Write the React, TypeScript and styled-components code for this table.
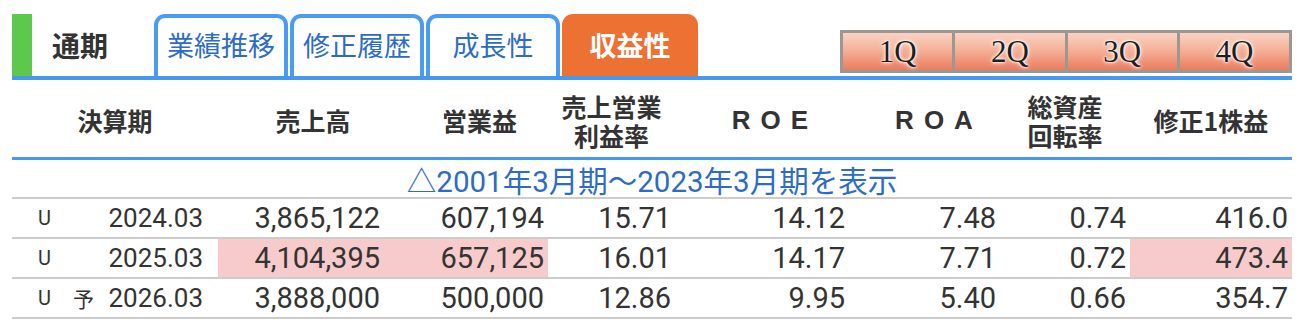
import React from "react";
import styled, { createGlobalStyle } from "styled-components";

const Global = createGlobalStyle`
  html, body { margin: 0; padding: 0; background: #fff; }
  body { font-family: Roboto, "Noto Sans CJK JP", sans-serif; }
`;

const Page = styled.div`
  padding: 14px 12px 0 12px;
  width: 1280px;
`;

const TabBar = styled.div`
  display: flex;
  align-items: flex-end;
  height: 62px;
  border-bottom: 4px solid #4599f0;
`;

const PeriodLabel = styled.div`
  box-sizing: border-box;
  width: 142px;
  height: 62px;
  border-left: 20px solid #5cc84c;
  padding-left: 20px;
  display: flex;
  align-items: center;
  font-family: "Noto Sans CJK JP", sans-serif;
  font-weight: 700;
  font-size: 28px;
  color: #333;
`;

const Tab = styled.div<{ $active?: boolean }>`
  box-sizing: border-box;
  width: ${(p) => (p.$active ? 136 : 134)}px;
  height: 62px;
  margin-right: 2px;
  border: 4px solid ${(p) => (p.$active ? "#ec7132" : "#4a9bf2")};
  border-bottom: none;
  border-radius: 11px 11px 0 0;
  background: ${(p) => (p.$active ? "#ec7132" : "#fff")};
  color: ${(p) => (p.$active ? "#fff" : "#2d6cc6")};
  font-family: "Noto Sans CJK JP", sans-serif;
  font-weight: ${(p) => (p.$active ? 700 : 400)};
  font-size: 27px;
  display: flex;
  align-items: center;
  justify-content: center;
  padding-bottom: 6px;
`;

const Spacer = styled.div`
  flex: 1;
`;

const QuarterGroup = styled.div`
  display: flex;
  gap: 3px;
  padding: 3px;
  width: 452px;
  height: 43px;
  box-sizing: border-box;
  margin-bottom: 3px;
  background: #9c9793;
`;

const QuarterButton = styled.div`
  flex: 1;
  display: flex;
  align-items: center;
  justify-content: center;
  background: linear-gradient(#fad3c4 0%, #f4ad95 50%, #ea7c5e 100%);
  font-family: "Liberation Serif", serif;
  font-size: 31px;
  line-height: 1;
  color: #1e1e1e;
  text-shadow: 0 0 2px #fff, 0 0 3px #fff, 0 0 5px #fff;
`;

const COLS = "206px 166px 164px 127px 174px 151px 130px 162px";

const HeaderRow = styled.div`
  display: grid;
  grid-template-columns: ${COLS};
  height: 77px;
  border-bottom: 3px solid #4599f0;
`;

const HeaderCell = styled.div<{ $shift?: number; $latin?: boolean }>`
  display: flex;
  align-items: center;
  justify-content: center;
  text-align: center;
  padding-left: ${(p) => p.$shift ?? 0}px;
  padding-top: 4px;
  font-family: ${(p) =>
    p.$latin ? `"Liberation Sans", sans-serif` : `"Noto Sans CJK JP", sans-serif`};
  font-weight: 700;
  font-size: ${(p) => (p.$latin ? 26 : 25)}px;
  line-height: 29px;
  letter-spacing: ${(p) => (p.$latin ? "10px" : "0")};
  color: #333;
`;

const LinkRow = styled.div`
  height: 37px;
  border-bottom: 2px solid #cccccc;
  display: flex;
  align-items: center;
  justify-content: center;
  font-family: Roboto, "Noto Sans CJK JP", sans-serif;
  font-size: 29.5px;
  color: #2d6cc6;
`;

const DataRow = styled.div`
  display: grid;
  grid-template-columns: ${COLS};
  height: 38px;
  border-bottom: 2px solid #cccccc;
`;

const Cell = styled.div<{ $hl?: boolean }>`
  display: flex;
  align-items: center;
  justify-content: flex-end;
  padding-right: 4px;
  background: ${(p) => (p.$hl ? "#f7cbcb" : "transparent")};
  font-family: Roboto, sans-serif;
  font-size: 29px;
  color: #333;
`;

const PeriodCell = styled.div`
  display: flex;
  align-items: center;
  padding: 0 15px 0 26px;
  color: #333;
`;

const Mark = styled.span`
  font-family: Roboto, sans-serif;
  font-size: 20px;
  width: 35px;
`;

const Forecast = styled.span`
  font-family: "Noto Sans CJK JP", sans-serif;
  font-size: 21px;
`;

const DateText = styled.span`
  margin-left: auto;
  font-family: Roboto, sans-serif;
  font-size: 26px;
`;

type Row = {
  forecast?: boolean;
  date: string;
  values: string[];
  hl: number[];
};

const rows: Row[] = [
  {
    date: "2024.03",
    values: ["3,865,122", "607,194", "15.71", "14.12", "7.48", "0.74", "416.0"],
    hl: [],
  },
  {
    date: "2025.03",
    values: ["4,104,395", "657,125", "16.01", "14.17", "7.71", "0.72", "473.4"],
    hl: [0, 1, 6],
  },
  {
    forecast: true,
    date: "2026.03",
    values: ["3,888,000", "500,000", "12.86", "9.95", "5.40", "0.66", "354.7"],
    hl: [],
  },
];

export default function App() {
  return (
    <>
      <Global />
      <Page>
        <TabBar>
          <PeriodLabel>通期</PeriodLabel>
          <Tab>業績推移</Tab>
          <Tab>修正履歴</Tab>
          <Tab>成長性</Tab>
          <Tab $active>収益性</Tab>
          <Spacer />
          <QuarterGroup>
            <QuarterButton>1Q</QuarterButton>
            <QuarterButton>2Q</QuarterButton>
            <QuarterButton>3Q</QuarterButton>
            <QuarterButton>4Q</QuarterButton>
          </QuarterGroup>
        </TabBar>
        <HeaderRow>
          <HeaderCell>決算期</HeaderCell>
          <HeaderCell $shift={24}>売上高</HeaderCell>
          <HeaderCell $shift={27}>営業益</HeaderCell>
          <HeaderCell>
            売上営業
            <br />
            利益率
          </HeaderCell>
          <HeaderCell $latin $shift={26}>ROE</HeaderCell>
          <HeaderCell $latin $shift={29}>ROA</HeaderCell>
          <HeaderCell>
            総資産
            <br />
            回転率
          </HeaderCell>
          <HeaderCell>修正1株益</HeaderCell>
        </HeaderRow>
        <LinkRow>△2001年3月期～2023年3月期を表示</LinkRow>
        {rows.map((r) => (
          <DataRow key={r.date}>
            <PeriodCell>
              <Mark>U</Mark>
              {r.forecast && <Forecast>予</Forecast>}
              <DateText>{r.date}</DateText>
            </PeriodCell>
            {r.values.map((v, i) => (
              <Cell key={i} $hl={r.hl.includes(i)}>
                {v}
              </Cell>
            ))}
          </DataRow>
        ))}
      </Page>
    </>
  );
}
